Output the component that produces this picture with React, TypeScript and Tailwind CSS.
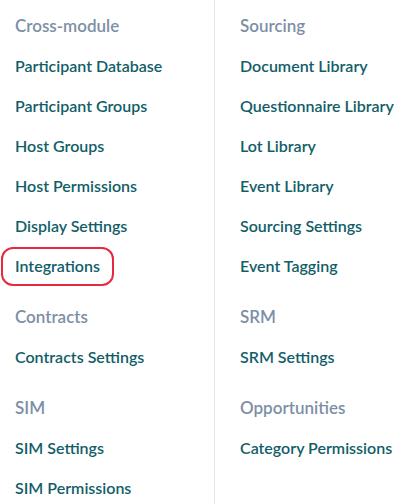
import React from "react";

type Group = { title: string; items: string[] };

const LEFT: Group[] = [
  {
    title: "Cross-module",
    items: [
      "Participant Database",
      "Participant Groups",
      "Host Groups",
      "Host Permissions",
      "Display Settings",
      "Integrations",
    ],
  },
  { title: "Contracts", items: ["Contracts Settings"] },
  { title: "SIM", items: ["SIM Settings", "SIM Permissions"] },
];

const RIGHT: Group[] = [
  {
    title: "Sourcing",
    items: [
      "Document Library",
      "Questionnaire Library",
      "Lot Library",
      "Event Library",
      "Sourcing Settings",
      "Event Tagging",
    ],
  },
  { title: "SRM", items: ["SRM Settings"] },
  { title: "Opportunities", items: ["Category Permissions"] },
];

// the item circled in the screenshot
const HIGHLIGHT = "Integrations";

function Column({ groups }: { groups: Group[] }) {
  return (
    <div className="flex flex-col gap-[11px]">
      {groups.map((g) => (
        <div key={g.title} className="flex flex-col">
          <div className="h-10 flex items-center text-[17px] font-semibold text-[#7d8fa6]">
            {g.title}
          </div>
          {g.items.map((item) => (
            <div key={item} className="h-10 flex items-center">
              {item === HIGHLIGHT ? (
                <a className="-ml-[14px] inline-flex h-[39px] items-center rounded-[12px] border-2 border-[#e8283c] px-[12px] text-[16px] font-semibold text-[#115e69]">
                  {item}
                </a>
              ) : (
                <a className="text-[16px] font-semibold text-[#115e69]">{item}</a>
              )}
            </div>
          ))}
        </div>
      ))}
    </div>
  );
}

export default function App() {
  return (
    <div
      className="flex w-[415px] h-[504px] bg-white overflow-hidden"
      style={{ fontFamily: "Lato, 'Open Sans', sans-serif" }}
    >
      <div className="w-[215px] pt-[6px] pl-[15px] border-r border-[#e6e8eb]">
        <Column groups={LEFT} />
      </div>
      <div className="flex-1 pt-[6px] pl-[25px]">
        <Column groups={RIGHT} />
      </div>
    </div>
  );
}
